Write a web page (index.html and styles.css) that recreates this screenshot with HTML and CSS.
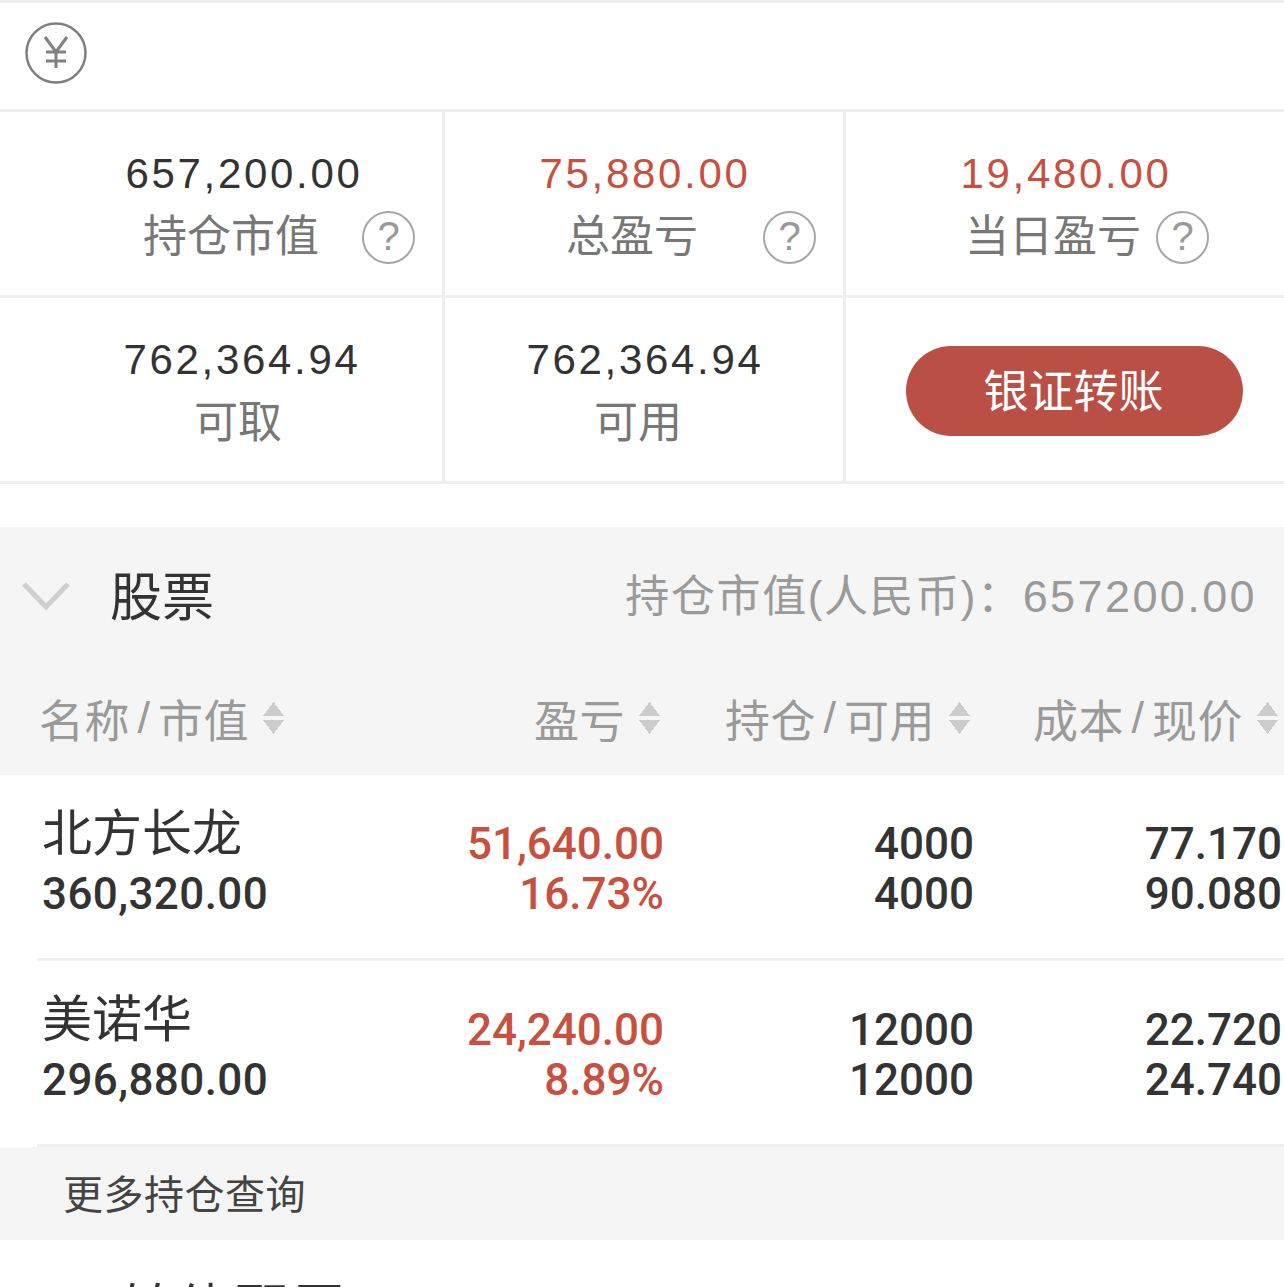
FILE: index.html
```html
<!DOCTYPE html>
<html>
  <head>
    <meta charset="utf-8">
    <title>持仓</title>
    <link rel="stylesheet" href="styles.css">
  </head>
  <body>
    <div class="currency_bar">
      <svg class="yen_icon" width="62" height="62" viewBox="0 0 62 62">
        <circle cx="31" cy="31" r="29.5" fill="none" stroke="#808080" stroke-width="2.5"/>
        <path d="M20 15 L31 30 L42 15 M31 30 V46 M21 30 H41 M21 39 H41" fill="none" stroke="#808080" stroke-width="3"/>
      </svg>
    </div>

    <div class="stats">
      <div class="stat stat_a">
        <div class="stat_num">657,200.00</div>
        <div class="stat_label">持仓市值</div>
        <span class="help">?</span>
      </div>
      <div class="stat stat_b">
        <div class="stat_num red">75,880.00</div>
        <div class="stat_label">总盈亏</div>
        <span class="help">?</span>
      </div>
      <div class="stat stat_c">
        <div class="stat_num red">19,480.00</div>
        <div class="stat_label">当日盈亏</div>
        <span class="help">?</span>
      </div>
      <div class="stat stat_d">
        <div class="stat_num">762,364.94</div>
        <div class="stat_label">可取</div>
      </div>
      <div class="stat stat_e">
        <div class="stat_num">762,364.94</div>
        <div class="stat_label">可用</div>
      </div>
      <div class="stat stat_btn">
        <a class="transfer">银证转账</a>
      </div>
    </div>

    <div class="section_head">
      <svg class="chevron" width="48" height="28" viewBox="0 0 48 28">
        <path d="M2 2 L24 25 L46 2" fill="none" stroke="#cfcfcf" stroke-width="5"/>
      </svg>
      <span class="section_title">股票</span>
      <span class="section_total">持仓市值(人民币)：<span class="total_num">657200.00</span></span>
    </div>

    <div class="table_head">
      <div class="head_cell head_name">名称<span class="slash">/</span>市值<i class="sort"></i></div>
      <div class="head_cell">盈亏<i class="sort"></i></div>
      <div class="head_cell">持仓<span class="slash">/</span>可用<i class="sort"></i></div>
      <div class="head_cell head_last">成本<span class="slash">/</span>现价<i class="sort"></i></div>
    </div>

    <div class="row">
      <div class="cell cell_name"><div class="stock_name">北方长龙</div><div>360,320.00</div></div>
      <div class="cell red"><div>51,640.00</div><div>16.73%</div></div>
      <div class="cell"><div>4000</div><div>4000</div></div>
      <div class="cell cell_last"><div>77.170</div><div>90.080</div></div>
    </div>
    <div class="row">
      <div class="cell cell_name"><div class="stock_name">美诺华</div><div>296,880.00</div></div>
      <div class="cell red"><div>24,240.00</div><div>8.89%</div></div>
      <div class="cell"><div>12000</div><div>12000</div></div>
      <div class="cell cell_last"><div>22.720</div><div>24.740</div></div>
    </div>

    <div class="more">更多持仓查询</div>
    <div class="next_title">可转债配置</div>
  </body>
</html>
```

FILE: styles.css
```css
html, body {
  margin: 0;
  padding: 0;
  height: 1287px;
  overflow: hidden;
  background: #fff;
  font-family: "Liberation Sans", "Noto Sans CJK SC", sans-serif;
  color: #333;
}

.red { color: #c8503f; }

.currency_bar {
  height: 106px;
  border-top: 3px solid #eee;
  border-bottom: 3px solid #eee;
  display: flex;
  align-items: center;
  padding-left: 25px;
}
.yen_icon { margin-top: -7px; }

/* summary grid */
.stats {
  display: grid;
  grid-template-columns: 445px 401px 1fr;
  grid-auto-rows: 186px;
}
.stat {
  position: relative;
  box-sizing: border-box;
  border-right: 3px solid #eee;
  border-bottom: 3px solid #eee;
  text-align: center;
}
.stat:nth-child(3n) { border-right: 0; }
.stat_num {
  font-size: 42px;
  letter-spacing: 2.7px;
  line-height: 50px;
  padding: 37px 0 0 2px;
}
.stat_label {
  font-size: 44px;
  line-height: 50px;
  color: #777;
  margin-top: 13px;
}
.stat_a .stat_num { padding-left: 46px; }
.stat_a .stat_label { padding-left: 20px; }
.stat_b .stat_label { padding-right: 24px; }
.stat_c .stat_label { padding-right: 24px; }
.stat_d .stat_num { padding-left: 42px; }
.stat_d .stat_label { padding-left: 34px; }
.stat_e .stat_label { padding-right: 12px; }

.help {
  position: absolute;
  right: 27px;
  top: 99px;
  width: 49px;
  height: 49px;
  border: 2.5px solid #a6a6a6;
  border-radius: 50%;
  color: #999;
  font-size: 40px;
  line-height: 47px;
}
.stat_c .help { right: 75px; }

.stat_btn {
  display: flex;
  align-items: center;
  justify-content: center;
  padding-top: 3px;
  padding-left: 19px;
}
.transfer {
  width: 337px;
  height: 90px;
  border-radius: 45px;
  background: #b94f45;
  color: #fff;
  font-size: 45px;
  line-height: 93px;
  text-align: center;
  text-indent: -2px;
}

/* stock section */
.section_head {
  margin-top: 43px;
  height: 138px;
  background: #f5f5f5;
  display: flex;
  align-items: center;
  padding: 0 27px 0 22px;
}
.section_title {
  margin-left: 40px;
  margin-top: -6px;
  font-size: 52px;
}
.section_total {
  margin-left: auto;
  margin-top: -6px;
  font-size: 44px;
  letter-spacing: 1.6px;
  color: #9a9a9a;
  white-space: nowrap;
}
.total_num {
  font-size: 45px;
  letter-spacing: 2.4px;
}

.table_head, .row {
  display: grid;
  grid-template-columns: 340px 324px 310px 1fr;
}
.table_head {
  height: 106px;
  padding-bottom: 4px;
  background: #f5f5f5;
  align-items: center;
}
.head_cell {
  display: flex;
  align-items: center;
  justify-content: flex-end;
  padding-right: 4px;
  font-size: 45px;
  letter-spacing: 0.5px;
  color: #9a9a9a;
}
.head_name {
  justify-content: flex-start;
  padding-left: 39px;
  padding-right: 0;
}
.head_last { padding-right: 6px; }
.slash { margin: 0 7.5px; }
.sort {
  width: 21px;
  height: 32px;
  margin-left: 14px;
  flex: none;
  background:
    conic-gradient(from 143deg at 50% 0, #ccc 74deg, transparent 0) 0 0 / 21px 14px no-repeat,
    conic-gradient(from -37deg at 50% 100%, #ccc 74deg, transparent 0) 0 100% / 21px 14px no-repeat;
}

.row {
  position: relative;
  height: 186px;
  font-family: "Roboto", "Noto Sans CJK SC", sans-serif;
  font-size: 44px;
  font-weight: 500;
  line-height: 50px;
  color: #333;
}
.row::after {
  content: "";
  position: absolute;
  left: 37px;
  right: 0;
  bottom: 0;
  height: 3px;
  background: #efefef;
}
.cell {
  box-sizing: border-box;
  padding: 44px 0 0 0;
  text-align: right;
}
.cell.red { color: #c8503f; }
.cell_name {
  padding: 34px 0 0 42px;
  text-align: left;
  letter-spacing: 0.4px;
}
.cell_last { padding-right: 2px; }
.stock_name {
  font-size: 50px;
  font-weight: 400;
  line-height: 50px;
  letter-spacing: 0;
  margin-bottom: 10px;
}

.more {
  box-sizing: border-box;
  height: 93px;
  padding: 3px 0 0 63px;
  background: #f5f5f5;
  font-size: 40px;
  letter-spacing: 0.5px;
  line-height: 90px;
  color: #444;
}
.next_title {
  margin-top: 40px;
  padding-left: 62px;
  font-size: 54px;
  letter-spacing: 3.5px;
  line-height: 60px;
  color: #333;
}
```
